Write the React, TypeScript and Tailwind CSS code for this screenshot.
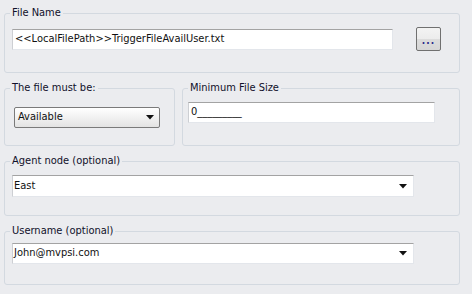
function Caret() {
  return (
    <svg width="8" height="5" viewBox="0 0 8 5" className="shrink-0">
      <path d="M0 0H8L4 4.5Z" fill="#111" />
    </svg>
  );
}

function Group({ label, className, children }: { label: string; className?: string; children: React.ReactNode }) {
  return (
    <fieldset className={`rounded-[3px] border border-[#d3d9e0] ${className ?? ""}`}>
      <legend className="ml-[5px] px-[2px] text-[11px] leading-[14px] text-[#10102a]">{label}</legend>
      {children}
    </fieldset>
  );
}

function TextBox({ value, className }: { value: string; className?: string }) {
  return (
    <div
      className={`flex items-center bg-white border border-[#e3e6eb] border-t-[#a3a3a3] border-l-[#cdcfd3] pl-[2px] text-[11px] text-[#111] ${className ?? ""}`}
    >
      {value}
    </div>
  );
}

function Combo({ value, className }: { value: string; className?: string }) {
  return (
    <div
      className={`flex items-center justify-between bg-white border border-[#e3e6eb] border-t-[#a3a3a3] border-l-[#cdcfd3] pl-[1px] pr-[6px] text-[11px] text-[#111] ${className ?? ""}`}
    >
      <span>{value}</span>
      <Caret />
    </div>
  );
}

export default function App() {
  return (
    <div
      className="w-[472px] h-[294px] bg-[#ebecef] pl-[4px] pt-[6px] flex flex-col gap-[8px]"
      style={{ fontFamily: '"DejaVu Sans Condensed", "Liberation Sans", Arial, sans-serif' }}
    >
      {/* File name */}
      <Group label="File Name" className="w-[456px] h-[67px]">
        <div className="flex items-center mt-[7px] ml-[7px]">
          <TextBox value="<<LocalFilePath>>TriggerFileAvailUser.txt" className="w-[381px] h-[21px]" />
          <button className="ml-[23px] w-[25px] h-[24px] rounded-[2px] border border-[#707070] bg-[linear-gradient(#f3f3f3_0%,#ececec_50%,#dcdcdc_50%,#d6d6d6_100%)] flex items-end justify-center pb-[4px]">
            <span className="text-[10px] leading-[10px] font-bold tracking-[1px] text-[#2a2a8a]">...</span>
          </button>
        </div>
      </Group>

      <div className="flex gap-[7px]">
        <Group label="The file must be:" className="w-[171px] h-[65px]">
          <div className="mt-[12px] ml-[9px] w-[146px] h-[21px] rounded-[2px] border border-[#7a7a7a] bg-[linear-gradient(#ffffff,#e3e3e3)] flex items-center justify-between pl-[3px] pr-[5px] text-[11px] text-[#111]">
            <span>Available</span>
            <Caret />
          </div>
        </Group>
        <Group label="Minimum File Size" className="w-[278px] h-[65px]">
          <TextBox value="0_________" className="mt-[7px] ml-[5px] w-[247px] h-[21px]" />
        </Group>
      </div>

      <Group label="Agent node (optional)" className="w-[456px] h-[62px]">
        <Combo value="East" className="mt-[7px] ml-[7px] w-[402px] h-[22px]" />
      </Group>

      <Group label="Username (optional)" className="w-[456px] h-[61px]">
        <Combo value="John@mvpsi.com" className="mt-[5px] ml-[7px] w-[402px] h-[21px]" />
      </Group>
    </div>
  );
}
